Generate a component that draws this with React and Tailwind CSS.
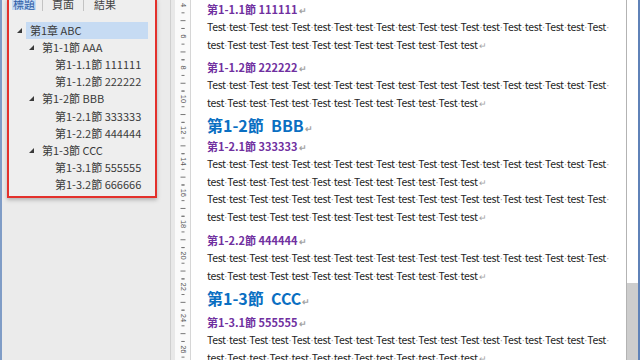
import React from "react";

// Navigation pane entries (Word "headings" view)
const TREE = [
  { level: 0, label: "第1章 ABC", arrow: true, selected: true },
  { level: 1, label: "第1-1節 AAA", arrow: true },
  { level: 2, label: "第1-1.1節 111111" },
  { level: 2, label: "第1-1.2節 222222" },
  { level: 1, label: "第1-2節 BBB", arrow: true },
  { level: 2, label: "第1-2.1節 333333" },
  { level: 2, label: "第1-2.2節 444444" },
  { level: 1, label: "第1-3節 CCC", arrow: true },
  { level: 2, label: "第1-3.1節 555555" },
  { level: 2, label: "第1-3.2節 666666" },
];

const INDENT = ["pl-[8px]", "pl-[20px]", "pl-[33px]"];

// long line: Test test ... Test (19 words), short line: test ... test (13 words)
const LINE_A = Array.from({ length: 19 }, (_, i) => (i % 2 === 0 ? "Test" : "test"));
const LINE_B = Array.from({ length: 13 }, (_, i) => (i % 2 === 0 ? "test" : "Test"));

const Ret = () => (
  <span className="text-[#a3a3a3] text-[9px] tracking-normal font-['Liberation_Sans',sans-serif] ml-[1px]">↵</span>
);

function Tri() {
  return (
    <svg width="5" height="5" viewBox="0 0 5 5" className="shrink-0">
      <polygon points="5,0 5,5 0,5" fill="#3a3a3a" />
    </svg>
  );
}

function BodyLine({ words, end }) {
  return (
    <div className="h-[17.5px] leading-[17.5px] whitespace-nowrap text-[10.5px] tracking-[-0.3px] text-[#262626]">
      {words.map((w, i) => (
        <React.Fragment key={i}>
          {w}
          {(i < words.length - 1 || !end) && (
            <span className="text-[#9c9c9c] font-['Liberation_Sans',sans-serif]">·</span>
          )}
        </React.Fragment>
      ))}
      {end && <Ret />}
    </div>
  );
}

function Para() {
  return (
    <>
      <BodyLine words={LINE_A} />
      <BodyLine words={LINE_B} end />
    </>
  );
}

function H3({ children, className = "" }) {
  return (
    <div className={`h-[18px] leading-[18px] text-[11px] font-semibold text-[#7030a0] whitespace-nowrap ${className}`}>
      {children}
      <Ret />
    </div>
  );
}

function H2({ children, className = "" }) {
  return (
    <div className={`h-[24px] leading-[24px] text-[16px] font-bold text-[#0a6fc2] whitespace-pre ${className}`}>
      {children}
      <Ret />
    </div>
  );
}

function Ruler() {
  const nums = [4, 6, 8, 10, 12, 14, 16, 18, 20, 22, 24, 26];
  const step = 31.3;
  return (
    <svg width="15" height="360" className="block">
      <rect x="0" y="0" width="15" height="360" fill="#fafafa" />
      {nums.map((n, i) => {
        const y = 5 + i * step;
        return (
          <g key={n}>
            <text
              x="8"
              y={y}
              transform={`rotate(90 8 ${y})`}
              fontSize="7.5"
              textAnchor="middle"
              dominantBaseline="central"
              fill="#555"
              fontFamily="Liberation Sans"
            >
              {n}
            </text>
            <line x1="6.5" x2="9.5" y1={y + step * 0.25} y2={y + step * 0.25} stroke="#777" strokeWidth="1" />
            <line x1="5.5" x2="10.5" y1={y + step * 0.5} y2={y + step * 0.5} stroke="#777" strokeWidth="1" />
            <line x1="6.5" x2="9.5" y1={y + step * 0.75} y2={y + step * 0.75} stroke="#777" strokeWidth="1" />
            <line x1="6.5" x2="9.5" y1={y - step * 0.25} y2={y - step * 0.25} stroke="#777" strokeWidth="1" />
          </g>
        );
      })}
    </svg>
  );
}

export default function App() {
  return (
    <div className="w-[640px] h-[360px] overflow-hidden flex bg-white font-['Noto_Sans_CJK_TC','Noto_Sans',sans-serif]">
      {/* window edge */}
      <div className="w-[2px] bg-[#7f9cc6] shrink-0" />

      {/* navigation pane */}
      <div className="w-[169px] shrink-0 bg-[#ebebeb] border-r border-[#cfcfcf] pl-[5px]">
        <div className="w-[150px] h-[200px] -mt-[2px] border-2 border-[#e3302b] bg-[#eeeeee] shadow-[0_2px_4px_rgba(0,0,0,0.25)]">
          {/* tabs */}
          <div className="-mt-[4px] h-[16px] flex items-center text-[11px] text-[#444] pl-[3px] whitespace-nowrap">
            <span className="px-[1px] bg-[#c4daf3] text-[#2e5da6] leading-[12px]">標題</span>
            <span className="ml-[6px] w-px h-[14px] bg-[#c3c3c3]" />
            <span className="ml-[9px]">頁面</span>
            <span className="ml-[9px] w-px h-[14px] bg-[#c3c3c3]" />
            <span className="ml-[10px]">結果</span>
          </div>

          {/* heading tree */}
          <div className="mt-[10px] flex flex-col">
            {TREE.map((t) => (
              <div key={t.label} className={`h-[17.1px] flex items-center text-[11px] text-[#3a3a3a] ${INDENT[t.level]}`}>
                <span className="w-[13px] shrink-0 flex items-center">{t.arrow && <Tri />}</span>
                <span
                  className={`flex-1 mr-[7px] -ml-[4px] pl-[4px] h-[17px] leading-[17px] whitespace-nowrap ${
                    t.selected ? "bg-[#c6dbf3]" : ""
                  }`}
                >
                  {t.label}
                </span>
              </div>
            ))}
          </div>
        </div>
      </div>

      {/* vertical ruler */}
      <div className="w-[20px] shrink-0 bg-[#e8e8e8] pl-[4px] border-r border-[#d6d6d6]">
        <Ruler />
      </div>

      {/* document page */}
      <div className="flex-1 min-w-0 border-r border-[#b3b3b3] pl-[16px] overflow-hidden">
        <H3>第1-1.1節 111111</H3>
        <Para />
        <H3 className="mt-[5px]">第1-1.2節 222222</H3>
        <Para />
        <H2 className="mt-[2px]">{"第1-2節  BBB"}</H2>
        <H3>第1-2.1節 333333</H3>
        <Para />
        <Para />
        <H3 className="mt-[6px]">第1-2.2節 444444</H3>
        <Para />
        <H2 className="mt-[2px]">{"第1-3節  CCC"}</H2>
        <H3 className="mt-[3px]">第1-3.1節 555555</H3>
        <Para />
      </div>

      {/* scroll bar */}
      <div className="w-[11px] shrink-0 flex flex-col">
        <div className="h-[283px] bg-white" />
        <div className="flex-1 bg-[#cdcdcd]" />
      </div>
      <div className="w-[2px] bg-[#5f82b8] shrink-0" />
    </div>
  );
}
